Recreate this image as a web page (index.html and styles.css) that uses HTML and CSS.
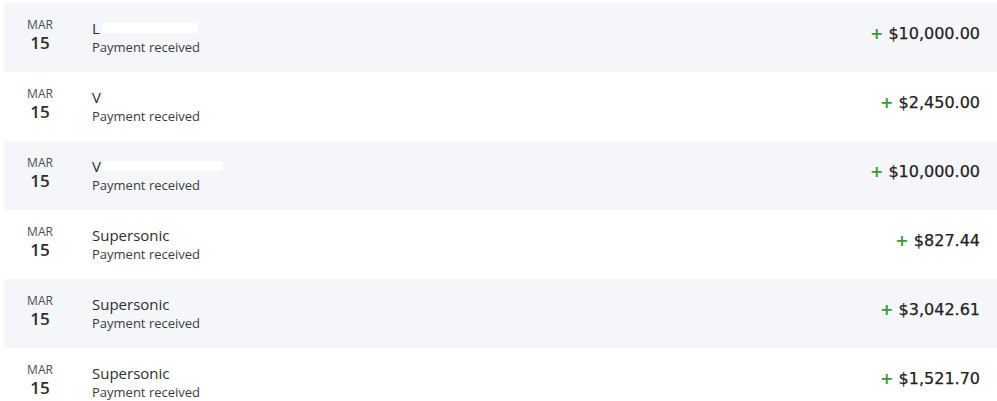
FILE: index.html
```html
<!DOCTYPE html>
<html lang="en">
<head>
  <meta charset="UTF-8" />
  <title>Activity</title>
  <link rel="stylesheet" href="styles.css">
</head>
<body>
  <ul class="activity">
    <li class="row">
      <div class="date"><span class="month">MAR</span><span class="day">15</span></div>
      <div class="info">
        <div class="name">L<span class="blur" style="width:96px"></span></div>
        <div class="desc">Payment received</div>
      </div>
      <div class="amount"><span class="plus">+</span> $10,000.00</div>
    </li>
    <li class="row">
      <div class="date"><span class="month">MAR</span><span class="day">15</span></div>
      <div class="info">
        <div class="name">V<span class="blur" style="width:40px"></span></div>
        <div class="desc">Payment received</div>
      </div>
      <div class="amount"><span class="plus">+</span> $2,450.00</div>
    </li>
    <li class="row">
      <div class="date"><span class="month">MAR</span><span class="day">15</span></div>
      <div class="info">
        <div class="name">V<span class="blur" style="width:120px"></span></div>
        <div class="desc">Payment received</div>
      </div>
      <div class="amount"><span class="plus">+</span> $10,000.00</div>
    </li>
    <li class="row">
      <div class="date"><span class="month">MAR</span><span class="day">15</span></div>
      <div class="info">
        <div class="name">Supersonic</div>
        <div class="desc">Payment received</div>
      </div>
      <div class="amount"><span class="plus">+</span> $827.44</div>
    </li>
    <li class="row">
      <div class="date"><span class="month">MAR</span><span class="day">15</span></div>
      <div class="info">
        <div class="name">Supersonic</div>
        <div class="desc">Payment received</div>
      </div>
      <div class="amount"><span class="plus">+</span> $3,042.61</div>
    </li>
    <li class="row">
      <div class="date"><span class="month">MAR</span><span class="day">15</span></div>
      <div class="info">
        <div class="name">Supersonic</div>
        <div class="desc">Payment received</div>
      </div>
      <div class="amount"><span class="plus">+</span> $1,521.70</div>
    </li>
  </ul>
</body>
</html>
```

FILE: styles.css
```css
body {
  margin: 0;
  padding: 3px 0 0 4px;
  background: #fff;
  font-family: "Open Sans", "Noto Sans", sans-serif;
  color: #2c2e2f;
}

.activity {
  list-style: none;
  margin: 0;
  padding: 0;
}

.row {
  display: flex;
  align-items: flex-start;
  height: 69px;
  box-sizing: border-box;
  padding: 14px 17px 0 12px;
}

.row:nth-child(odd) {
  background: #f5f6fa;
}

.date {
  width: 48px;
  display: flex;
  flex-direction: column;
  align-items: center;
  margin-right: 28px;
}

.month {
  font-size: 12px;
  line-height: 16px;
  color: #4a4f52;
}

.day {
  font-size: 17px;
  line-height: 20px;
  font-weight: 600;
  color: #2c2e2f;
}

.info {
  flex: 1;
  padding-top: 1px;
}

.name {
  font-size: 15px;
  line-height: 20px;
  color: #2c2e2f;
  display: flex;
  align-items: center;
}

.blur {
  display: inline-block;
  height: 10px;
  background: #fff;
  margin-left: 2px;
}

.desc {
  font-size: 13px;
  line-height: 18px;
  color: #3a3d40;
}

.amount {
  padding-top: 7px;
  font-family: "DejaVu Sans", sans-serif;
  font-size: 16px;
  line-height: 20px;
  color: #1f2123;
  -webkit-text-stroke: 0.25px #1f2123;
}

.plus {
  color: #3a9a3a;
  font-weight: bold;
  -webkit-text-stroke: 0;
}
```
